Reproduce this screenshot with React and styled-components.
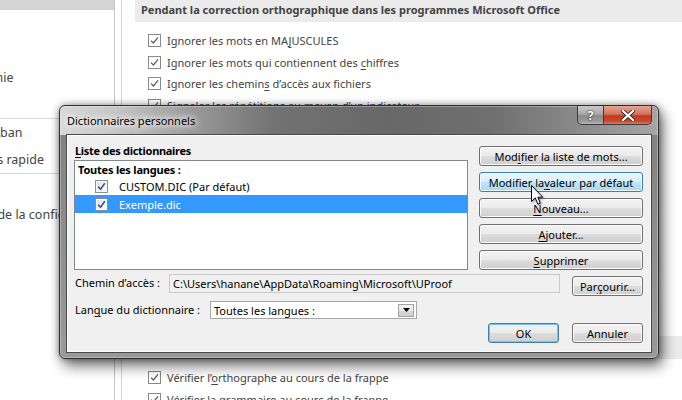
import React from "react";
import styled, { createGlobalStyle, css } from "styled-components";

const GlobalStyle = createGlobalStyle`
  html, body { margin: 0; padding: 0; }
  body {
    width: 682px;
    height: 400px;
    overflow: hidden;
    background: #fff;
    font-family: "Noto Sans", "Open Sans", sans-serif;
  }
  #root { position: relative; width: 682px; height: 400px; overflow: hidden; }
`;

const Page = styled.div`
  display: flex;
  width: 682px;
  height: 400px;
  background: #fff;
  color: #444;
  font-size: 11px;
`;

/* ---------- options window behind ---------- */

const Sidebar = styled.nav`
  width: 114px;
  flex: none;
  border-right: 1px solid #c6c6c6;
  overflow: hidden;
`;

const NavList = styled.div`
  display: flex;
  flex-direction: column;
  margin-top: -17px;
`;

const NavItem = styled.div`
  height: 27px;
  flex: none;
  line-height: 27px;
  margin-left: -110px;
  font-size: 12.5px;
  white-space: nowrap;
  color: #444;
  background: ${(p) => (p.$active ? "#d5d5d5" : "transparent")};
`;

const NavSep = styled.div`
  height: 1px;
  flex: none;
  margin-right: 4px;
  background: #dadada;
`;

const Gutter = styled.div`
  width: 6px;
  flex: none;
  border-right: 1px solid #d4d4d4;
`;

const Main = styled.main`
  flex: 1;
  padding-left: 13px;
  display: flex;
  flex-direction: column;
  overflow: hidden;
`;

const SectionBand = styled.div`
  flex: none;
  height: ${(p) => p.$h}px;
  line-height: ${(p) => p.$h - 2}px;
  padding-left: 6px;
  background: #ebebeb;
  font-weight: 700;
  color: #444;
  white-space: nowrap;
`;

const OptionList = styled.div`
  flex: none;
  display: flex;
  flex-direction: column;
  padding: 8px 0 0 13px;
  min-height: ${(p) => p.$min || 0}px;
  box-sizing: border-box;
`;

const OptionRow = styled.label`
  flex: none;
  display: flex;
  align-items: center;
  height: 21.5px;
  gap: 6px;
  white-space: nowrap;
  color: #444;
`;

const FlatBox = styled.span`
  width: 11px;
  height: 11px;
  border: 1px solid #8a8a8a;
  background: #fff;
  display: inline-flex;
  align-items: center;
  justify-content: center;
  flex: none;
`;

const Acc = styled.span`
  text-decoration: underline;
  text-underline-offset: 2px;
`;

const FlatCheck = ({ label }) => (
  <OptionRow>
    <FlatBox>
      <svg width="9" height="9" viewBox="0 0 9 9">
        <path d="M1 4.6 L3.4 7 L8 1.4" fill="none" stroke="#5a5a5a" strokeWidth="1.2" />
      </svg>
    </FlatBox>
    {label}
  </OptionRow>
);

/* ---------- dialog ---------- */

const Window = styled.div`
  position: absolute;
  left: 59px;
  top: 105px;
  width: 600px;
  box-sizing: border-box;
  border: 1px solid #2e2e2e;
  border-radius: 6px;
  padding: 0 6px 5px 6px;
  background:
    linear-gradient(90deg, #d9d9d9 0%, #c4c4c4 10%, #9a9a9a 22%, #727272 36%, #686868 55%, #6f6f6f 72%, #8d8d8d 88%, #a6a6a6 100%) top / 100% 29px no-repeat,
    linear-gradient(180deg, #7e7e7e 0%, #8d8d8d 50%, #9a9a9a 100%);
  box-shadow:
    inset 0 0 0 1px rgba(255,255,255,0.3),
    4px 7px 14px rgba(0,0,0,0.55),
    0 0 7px rgba(0,0,0,0.4);
  font-family: "Noto Sans", "Open Sans", sans-serif;
  font-size: 11px;
  color: #000;
`;

const TitleBar = styled.div`
  height: 28px;
  display: flex;
  align-items: flex-start;
  justify-content: space-between;
`;

const Title = styled.div`
  padding: 7px 0 0 1px;
  font-size: 11px;
  line-height: 16px;
  color: #000;
  text-shadow: 0 0 6px #fff, 0 0 8px #fff, 0 0 10px rgba(255,255,255,0.9);
`;

const CaptionButtons = styled.div`
  display: flex;
`;

const CaptionBtn = styled.div`
  height: 19px;
  width: ${(p) => p.$w}px;
  box-sizing: border-box;
  border: 1px solid #3b3b3b;
  border-top: none;
  display: flex;
  align-items: center;
  justify-content: center;
  color: #fff;
  font-weight: 700;
  font-size: 13px;
  ${(p) =>
    p.$close
      ? css`
          border-radius: 0 0 5px 0;
          border-left: none;
          background: linear-gradient(180deg, #e8a493 0%, #d4735e 45%, #c0391f 55%, #c94a31 85%, #e07a5e 100%);
        `
      : css`
          border-radius: 0 0 0 5px;
          background: linear-gradient(180deg, #c9c9c9 0%, #a9a9a9 45%, #8b8b8b 55%, #9a9a9a 85%, #b8b8b8 100%);
        `}
  text-shadow: 0 0 2px #333, 0 0 1px #000;
`;

const Client = styled.div`
  border: 1px solid #4a4a4a;
  box-shadow: inset 0 0 0 1px #fdfdfd;
  background: #f0f0f0;
  padding: 9px 8px 9px 7px;
  display: flex;
  flex-direction: column;
`;

const TopSection = styled.div`
  display: flex;
  gap: 11px;
`;

const LeftCol = styled.div`
  width: 394px;
  display: flex;
  flex-direction: column;
`;

const GroupLabel = styled.div`
  height: 16px;
  line-height: 14px;
  padding-left: 1px;
  font-weight: 700;
  letter-spacing: -0.3px;
`;

const ListBox = styled.div`
  height: 110px;
  box-sizing: border-box;
  border: 1px solid #828790;
  background: #fff;
  display: flex;
  flex-direction: column;
`;

const ListHeader = styled.div`
  height: 16px;
  line-height: 17px;
  padding-left: 3px;
  font-weight: 700;
  letter-spacing: -0.2px;
`;

const ListRow = styled.div`
  height: 18px;
  display: flex;
  align-items: center;
  gap: 11px;
  padding-left: 20px;
  color: ${(p) => (p.$selected ? "#fff" : "#000")};
  background: ${(p) => (p.$selected ? "#3399ff" : "transparent")};
`;

const WinBox = styled.span`
  width: 13px;
  height: 13px;
  box-sizing: border-box;
  border: 1px solid #8e8f8f;
  background: linear-gradient(135deg, #dcdee3 0%, #f4f4f4 60%, #fbfbfb 100%);
  box-shadow: inset 0 0 0 1px #f7f7f7;
  display: inline-flex;
  align-items: center;
  justify-content: center;
`;

const WinCheck = () => (
  <WinBox>
    <svg width="9" height="9" viewBox="0 0 9 9">
      <path d="M1.2 4.6 L3.6 7.2 L7.8 1.2" fill="none" stroke="#3f5492" strokeWidth="1.6" />
    </svg>
  </WinBox>
);

const ButtonStack = styled.div`
  width: 164px;
  margin-top: 2px;
  display: flex;
  flex-direction: column;
  gap: 6px;
`;

const DialogButton = styled.div`
  height: 20px;
  width: ${(p) => (p.$w ? `${p.$w}px` : "auto")};
  box-sizing: border-box;
  flex: none;
  border: 1px solid #707070;
  border-radius: 3px;
  display: flex;
  align-items: center;
  justify-content: center;
  white-space: nowrap;
  color: #000;
  background: linear-gradient(180deg, #f2f2f2 0%, #ebebeb 50%, #dddddd 50%, #cfcfcf 100%);
  box-shadow: inset 0 0 0 1px #fbfbfb;
  ${(p) =>
    p.$hover &&
    css`
      border-color: #3c7fb1;
      background: linear-gradient(180deg, #eaf6fd 0%, #d9f0fc 50%, #bee6fd 50%, #a7d9f5 100%);
      box-shadow: inset 0 0 0 1px #f4fbfe;
    `}
  ${(p) =>
    p.$default &&
    css`
      border-color: #3c7fb1;
      box-shadow: inset 0 0 0 1px #6ec6f1;
    `}
`;

const FieldRow = styled.div`
  display: flex;
  align-items: flex-start;
  margin-top: ${(p) => p.$mt}px;
  height: ${(p) => p.$h}px;
`;

const FieldLabel = styled.div`
  width: ${(p) => p.$w}px;
  flex: none;
  padding-left: 1px;
  box-sizing: border-box;
  line-height: ${(p) => p.$lh}px;
  white-space: nowrap;
`;

const PathField = styled.div`
  width: 391px;
  height: 19px;
  box-sizing: border-box;
  border: 1px solid #c9c9c9;
  background: #f0f0f0;
  padding-left: 3px;
  line-height: 17px;
  white-space: nowrap;
  overflow: hidden;
  margin-right: 12px;
`;

const ButtonSlot = styled.div`
  margin-top: ${(p) => p.$mt || 0}px;
`;

const Select = styled.div`
  width: 207px;
  height: 18px;
  box-sizing: border-box;
  border: 1px solid #a7a7a7;
  background: #fff;
  display: flex;
  align-items: center;
  justify-content: space-between;
  padding: 0 2px 0 3px;
`;

const SelectArrow = styled.div`
  width: 16px;
  height: 13px;
  box-sizing: border-box;
  border: 1px solid #a4a4a4;
  background: linear-gradient(180deg, #f4f4f4 0%, #e6e6e6 50%, #d9d9d9 51%, #cfcfcf 100%);
  display: flex;
  align-items: center;
  justify-content: center;
`;

const Actions = styled.div`
  display: flex;
  justify-content: flex-end;
  gap: 13px;
  margin-top: 4px;
`;

const Cursor = styled.svg`
  position: absolute;
  left: 531px;
  top: 185px;
  filter: drop-shadow(1px 1px 1px rgba(0, 0, 0, 0.35));
`;

export default function App() {
  return (
    <>
      <GlobalStyle />
      <Page>
        <Sidebar>
          <NavList>
            <NavItem $active>Vérification</NavItem>
            <NavItem>Enregistrement</NavItem>
            <NavItem>Langue</NavItem>
            <NavItem>Options d’ergonomie</NavItem>
            <NavItem>Options avancées</NavItem>
            <NavSep />
            <NavItem>Personnaliser le ruban</NavItem>
            <NavItem>Barre d’outils Accès rapide</NavItem>
            <NavSep />
            <NavItem>Compléments</NavItem>
            <NavItem>Centre de gestion de la confidentialité</NavItem>
          </NavList>
        </Sidebar>
        <Gutter />
        <Main>
          <SectionBand $h={22}>
            Pendant la correction orthographique dans les programmes Microsoft Office
          </SectionBand>
          <OptionList $min={314}>
            <FlatCheck label={<span>Ignorer les mots en MA<Acc>J</Acc>USCULES</span>} />
            <FlatCheck label={<span>Ignorer les mots qui contiennent des <Acc>c</Acc>hiffres</span>} />
            <FlatCheck label={<span>Ignorer les chemin<Acc>s</Acc> d’accès aux fichiers</span>} />
            <FlatCheck label={<span>Signaler les répétitions au moyen d’un indicateur</span>} />
          </OptionList>
          <SectionBand $h={23}>
            Lors de la correction orthographique et grammaticale dans Word
          </SectionBand>
          <OptionList>
            <FlatCheck label={<span>Vérifier l’<Acc>o</Acc>rthographe au cours de la frappe</span>} />
            <FlatCheck label={<span>Vérifier la grammaire au cours de la frappe</span>} />
          </OptionList>
        </Main>
      </Page>

      <Window>
        <TitleBar>
          <Title>Dictionnaires personnels</Title>
          <CaptionButtons>
            <CaptionBtn $w={27}>?</CaptionBtn>
            <CaptionBtn $w={48} $close>
              <svg width="14" height="11" viewBox="0 0 14 11">
                <path d="M2 1 L12 10 M12 1 L2 10" stroke="#3a2a2a" strokeWidth="4" strokeLinecap="square" />
                <path d="M2 1 L12 10 M12 1 L2 10" stroke="#fff" strokeWidth="2.2" strokeLinecap="square" />
              </svg>
            </CaptionBtn>
          </CaptionButtons>
        </TitleBar>
        <Client>
          <TopSection>
            <LeftCol>
              <GroupLabel><Acc>L</Acc>iste des dictionnaires</GroupLabel>
              <ListBox>
                <ListHeader>Toutes les langues :</ListHeader>
                <ListRow>
                  <WinCheck />
                  CUSTOM.DIC (Par défaut)
                </ListRow>
                <ListRow $selected>
                  <WinCheck />
                  Exemple.dic
                </ListRow>
              </ListBox>
            </LeftCol>
            <ButtonStack>
              <DialogButton>Mod<Acc>i</Acc>fier la liste de mots...</DialogButton>
              <DialogButton $hover>Modifier la <Acc>v</Acc>aleur par défaut</DialogButton>
              <DialogButton><Acc>N</Acc>ouveau...</DialogButton>
              <DialogButton><Acc>A</Acc>jouter...</DialogButton>
              <DialogButton><Acc>S</Acc>upprimer</DialogButton>
            </ButtonStack>
          </TopSection>

          <FieldRow $mt={4} $h={22}>
            <FieldLabel $w={95} $lh={18}>Chemin d’accès :</FieldLabel>
            <PathField>C:\Users\hanane\AppData\Roaming\Microsoft\UProof</PathField>
            <ButtonSlot $mt={2}>
              <DialogButton $w={71}>Par<Acc>ç</Acc>ourir...</DialogButton>
            </ButtonSlot>
          </FieldRow>

          <FieldRow $mt={5} $h={18}>
            <FieldLabel $w={136} $lh={18}>Lan<Acc>g</Acc>ue du dictionnaire :</FieldLabel>
            <Select>
              <span>Toutes les langues :</span>
              <SelectArrow>
                <svg width="7" height="4" viewBox="0 0 7 4">
                  <path d="M0 0 H7 L3.5 4 Z" fill="#000" />
                </svg>
              </SelectArrow>
            </Select>
          </FieldRow>

          <Actions>
            <DialogButton $w={71} $default>OK</DialogButton>
            <DialogButton $w={71}>Annuler</DialogButton>
          </Actions>
        </Client>
      </Window>

      <Cursor width="13" height="21" viewBox="0 0 13 21">
        <path d="M0.5 0.5 V16.5 L4.3 12.9 L6.9 19.2 L9.3 18.2 L6.8 12.2 H11.7 Z" fill="#fff" stroke="#000" strokeWidth="1" strokeLinejoin="miter" />
      </Cursor>
    </>
  );
}
